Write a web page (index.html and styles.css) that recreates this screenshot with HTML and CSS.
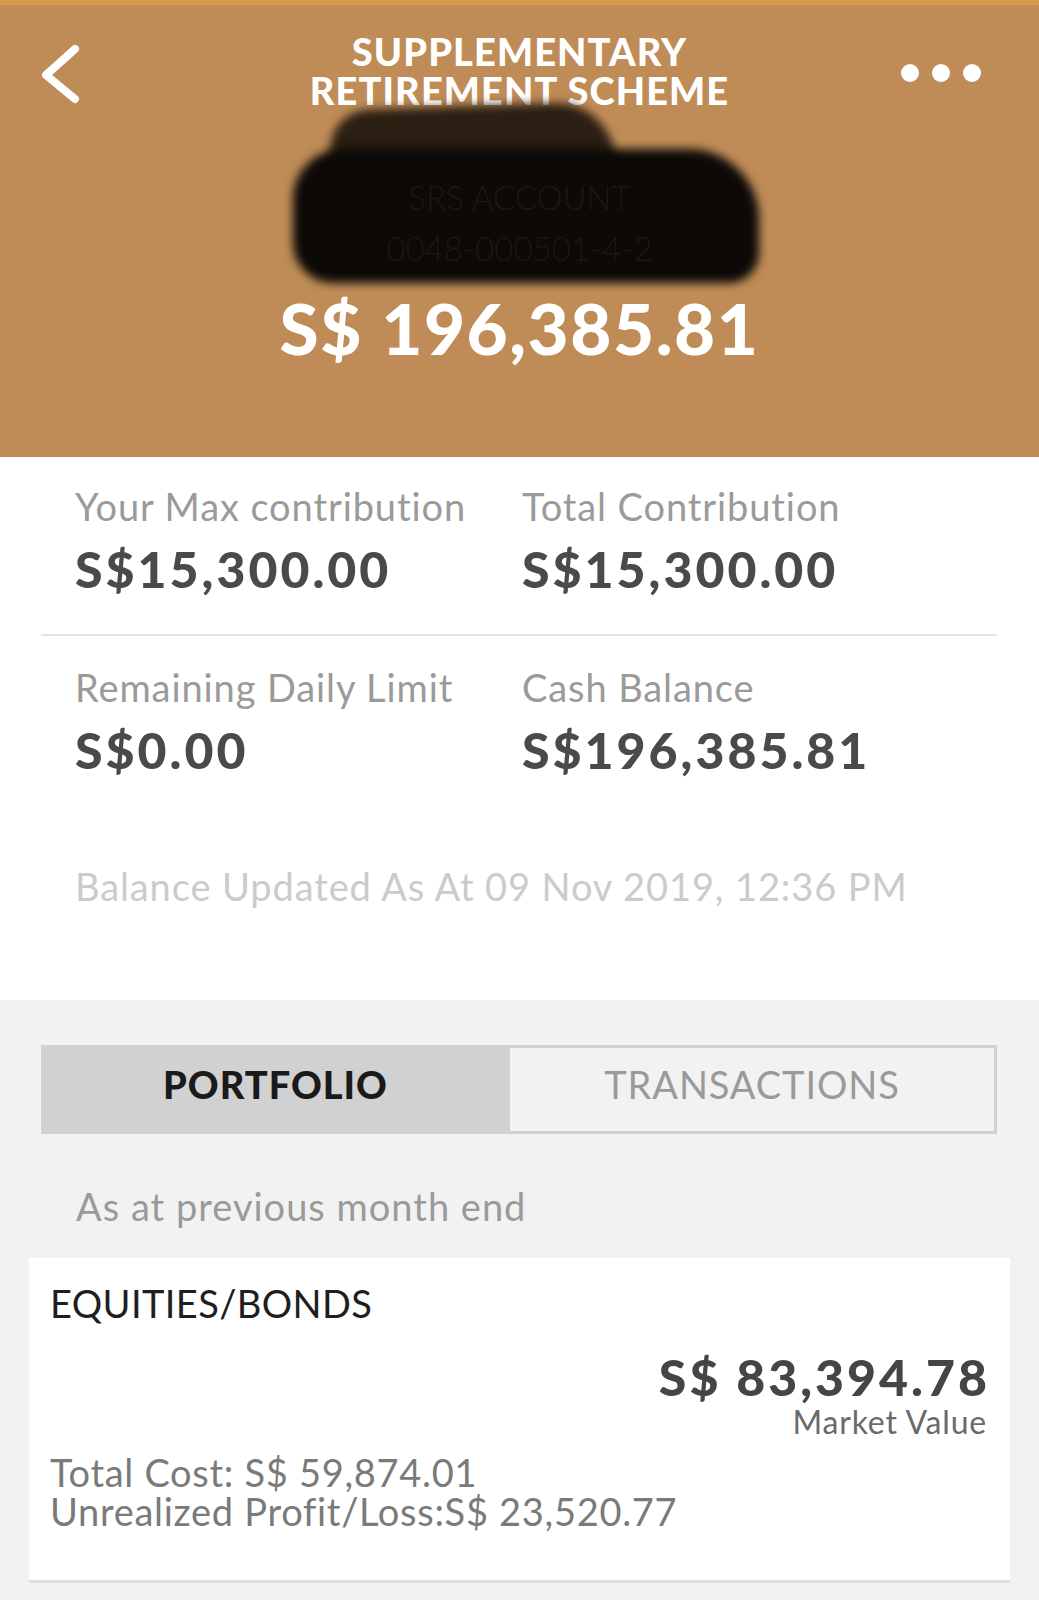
FILE: index.html
```
<!DOCTYPE html>
<html lang="en">
	<head>
		<meta charset="UTF-8" />
		<meta name="viewport" content="width=device-width, initial-scale=1.0" />
		<title>Supplementary Retirement Scheme</title>
		<link rel="stylesheet" href="styles.css">
	</head>
	<body>
		<header class="hero">
			<div class="hero-nav">
				<a class="back" href="#">
					<svg width="42" height="60" viewBox="0 0 42 60">
						<path d="M36 5 L7 31 L36 55" fill="none" stroke="#fff" stroke-width="8" stroke-linecap="round" stroke-linejoin="round" />
					</svg>
				</a>
				<h1 class="hero-title">SUPPLEMENTARY<br>RETIREMENT SCHEME</h1>
				<div class="more"><span></span><span></span><span></span></div>
			</div>

			<!-- account details are scribbled out in the screenshot -->
			<div class="account">
				<span class="scribble scribble-top"></span>
				<span class="scribble scribble-main"></span>
				<div class="account-name">SRS ACCOUNT</div>
				<div class="account-no">0048-000501-4-2</div>
			</div>

			<div class="hero-amount">S$ 196,385.81</div>
		</header>

		<section class="stats">
			<div class="stat-row">
				<div class="stat">
					<div class="stat-label">Your Max contribution</div>
					<div class="stat-value">S$15,300.00</div>
				</div>
				<div class="stat">
					<div class="stat-label">Total Contribution</div>
					<div class="stat-value">S$15,300.00</div>
				</div>
			</div>
			<div class="stat-row">
				<div class="stat">
					<div class="stat-label">Remaining Daily Limit</div>
					<div class="stat-value">S$0.00</div>
				</div>
				<div class="stat">
					<div class="stat-label">Cash Balance</div>
					<div class="stat-value">S$196,385.81</div>
				</div>
			</div>
			<p class="updated">Balance Updated As At 09 Nov 2019, 12:36 PM</p>
		</section>

		<section class="holdings">
			<div class="tabs">
				<div class="tab active">PORTFOLIO</div>
				<div class="tab">TRANSACTIONS</div>
			</div>

			<p class="as-at">As at previous month end</p>

			<div class="card">
				<div class="card-title">EQUITIES/BONDS</div>
				<div class="card-value">
					<div class="card-amount">S$ 83,394.78</div>
					<div class="card-caption">Market Value</div>
				</div>
				<div class="card-line">Total Cost: S$ 59,874.01</div>
				<div class="card-line">Unrealized Profit/Loss:S$ 23,520.77</div>
			</div>
		</section>
	</body>
</html>
```

FILE: styles.css
```
body {
	margin: 0;
	font-family: Lato, 'Open Sans', sans-serif;
	background-color: #f2f2f2;
}
p {
	margin: 0;
}

/* header */
.hero {
	background-color: #bf8c57;
	border-top: 5px solid #d49b50;
	padding-bottom: 94px;
	color: #fff;
}
.hero-nav {
	display: grid;
	grid-template-columns: 1fr auto 1fr;
	align-items: start;
	padding: 27px 58px 0;
}
.back {
	display: block;
	margin: 12px 0 0 -19px;
	width: 42px;
	height: 60px;
}
.hero-title {
	margin: 0 0 -1px;
	font-size: 38px;
	line-height: 39px;
	font-weight: 900;
	letter-spacing: 1.1px;
	text-align: center;
}
.more {
	display: flex;
	justify-content: flex-end;
	gap: 13px;
	margin-top: 32px;
}
.more span {
	width: 18px;
	height: 18px;
	border-radius: 50%;
	background-color: #fff;
}

.account {
	position: relative;
	height: 184px;
	padding-top: 63px;
	box-sizing: border-box;
	text-align: center;
	font-size: 33px;
	line-height: 51px;
	font-weight: 300;
	color: #1f1710;
}
.account-name,
.account-no {
	position: relative;
}
.scribble {
	position: absolute;
	filter: blur(5px);
}
.scribble-top {
	left: 330px;
	top: -3px;
	width: 285px;
	height: 75px;
	background-color: #2b1e13;
	border-radius: 40px 60px 10px 10px;
	transform: rotate(-2deg);
}
.scribble-main {
	left: 293px;
	top: 40px;
	width: 466px;
	height: 134px;
	background-color: #0c0907;
	border-radius: 50px 70px 30px 40px;
}

.hero-amount {
	text-align: center;
	font-size: 71px;
	line-height: 70px;
	font-weight: 900;
	letter-spacing: 1.5px;
}

/* contribution figures */
.stats {
	background-color: #fff;
	padding: 29px 42px 94px 41px;
}
.stat-row {
	display: grid;
	grid-template-columns: 447px 1fr;
	padding: 0 0 37px 34px;
}
.stat-row + .stat-row {
	border-top: 2px solid #e2e2e2;
	padding-top: 31px;
}
.stat-label {
	font-size: 38px;
	line-height: 40px;
	letter-spacing: 0.9px;
	color: #9a9a9a;
	margin-bottom: 15px;
}
.stat-value {
	font-size: 50px;
	line-height: 56px;
	font-weight: 900;
	letter-spacing: 3px;
	color: #4a4a4a;
}
.updated {
	margin-top: 51px;
	padding-left: 34px;
	font-size: 38px;
	line-height: 40px;
	letter-spacing: 0.9px;
	color: #cbcbcb;
}

/* portfolio */
.holdings {
	padding: 45px 0 22px;
}
.tabs {
	display: flex;
	margin: 0 42px 0 41px;
	height: 89px;
	box-sizing: border-box;
	border: 3px solid #d1d1d1;
	border-left: none;
}
.tab {
	flex: 1;
	display: flex;
	align-items: center;
	justify-content: center;
	padding-bottom: 12px;
	font-size: 38px;
	line-height: 40px;
	letter-spacing: 0.9px;
	color: #9a9a9a;
}
.tab.active {
	flex: none;
	width: 469px;
	background-color: #d1d1d1;
	color: #1a1a1a;
	font-weight: 900;
	letter-spacing: 1px;
}
.as-at {
	margin: 52px 0 32px;
	padding-left: 76px;
	font-size: 38px;
	line-height: 40px;
	letter-spacing: 1px;
	color: #9a9a9a;
}
.card {
	margin: 0 29px;
	padding: 25px 23px 49px 21px;
	background-color: #fff;
	box-shadow: 0 3px 0 #dedede;
}
.card-title {
	font-size: 38px;
	line-height: 40px;
	letter-spacing: 0.4px;
	color: #1e1e1e;
}
.card-value {
	margin-top: 28px;
	text-align: right;
}
.card-amount {
	font-size: 50px;
	line-height: 52px;
	font-weight: 900;
	letter-spacing: 3px;
	margin-right: -3px;
	color: #454545;
}
.card-caption {
	margin-top: 3px;
	font-size: 32px;
	line-height: 32px;
	letter-spacing: 0.8px;
	color: #6a6a6a;
}
.card-value + .card-line {
	margin-top: 15px;
}
.card-line {
	font-size: 38px;
	line-height: 39px;
	letter-spacing: 0.7px;
	color: #7a7a7a;
}
```
